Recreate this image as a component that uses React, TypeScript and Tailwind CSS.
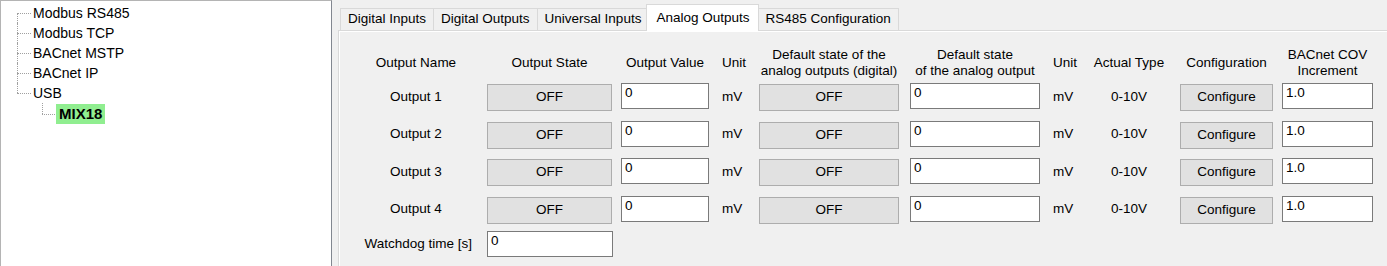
import React from 'react';

const cols = [
  'w-[142px]',
  'w-[125px]',
  'ml-[9px] w-[88px]',
  'ml-[13px] w-[37px]',
  'w-[140px]',
  'ml-[11px] w-[130px]',
  'ml-[13px] w-[40px]',
  'w-[72px]',
  'ml-[15px] w-[93px]',
  'ml-[9px] w-[91px]',
];

const headers = [
  'Output Name',
  'Output State',
  'Output Value',
  'Unit',
  'Default state of the\nanalog outputs (digital)',
  'Default state\nof the analog output',
  'Unit',
  'Actual Type',
  'Configuration',
  'BACnet COV\nIncrement',
];

const tabs = ['Digital Inputs', 'Digital Outputs', 'Universal Inputs', 'Analog Outputs', 'RS485 Configuration'];

const treeItems = ['Modbus RS485', 'Modbus TCP', 'BACnet MSTP', 'BACnet IP', 'USB'];

function Btn({ label }: { label: string }) {
  return (
    <div className="mt-[1px] h-[27px] w-full flex items-center justify-center bg-[#e1e1e1] border border-[#adadad]">
      {label}
    </div>
  );
}

function Field({ value }: { value: string }) {
  return (
    <div className="h-[26px] w-full bg-white border border-[#7a7a7a] pl-[3px] pt-[1px] leading-[16px]">{value}</div>
  );
}

function Label({ text, left }: { text: string; left?: boolean }) {
  return <div className={`h-[28px] flex items-center ${left ? 'justify-start' : 'justify-center'}`}>{text}</div>;
}

function Row({ cells }: { cells: React.ReactNode[] }) {
  return (
    <div className="flex items-start h-[28px]">
      {cells.map((c, i) => (
        <div key={i} className={`shrink-0 ${cols[i]}`}>
          {c}
        </div>
      ))}
    </div>
  );
}

function TreeRow({ text, pos }: { text: string; pos: 'first' | 'mid' | 'last' }) {
  return (
    <div className="flex items-center h-[20px] pl-[16px]">
      <span className="relative w-[14px] self-stretch">
        <span
          className={`absolute left-0 border-l border-dotted border-[#a0a0a0] ${
            pos === 'first' ? 'top-[10px] bottom-0' : pos === 'last' ? 'top-0 h-[10px]' : 'top-0 bottom-0'
          }`}
        />
        <span className="absolute left-0 right-0 top-[10px] border-t border-dotted border-[#a0a0a0]" />
      </span>
      <span className="ml-[2px]">{text}</span>
    </div>
  );
}

export default function App() {
  return (
    <div className="flex h-[266px] w-[1387px] overflow-hidden bg-[#f0f0f0] text-black font-['Liberation_Sans',Arial,sans-serif]">
      {/* Tree */}
      <div className="w-[332px] shrink-0 bg-white border-t border-l border-[#b4b4b4] border-r border-r-[#828790] pt-[2px] text-[14px]">
        {treeItems.map((t, i) => (
          <TreeRow key={t} text={t} pos={i === 0 ? 'first' : i === treeItems.length - 1 ? 'last' : 'mid'} />
        ))}
        <div className="flex items-center h-[20px] pl-[41px] mt-[1px]">
          <span className="relative w-[13px] self-stretch">
            <span className="absolute left-0 top-[-1px] h-[11px] border-l border-dotted border-[#a0a0a0]" />
            <span className="absolute left-0 right-0 top-[10px] border-t border-dotted border-[#a0a0a0]" />
          </span>
          <span className="ml-[1px] h-[20px] px-[3px] flex items-center bg-[#90ee90] font-bold text-[15px]">MIX18</span>
        </div>
      </div>

      {/* Tab control */}
      <div className="ml-[6px] flex-1 flex flex-col text-[13.5px]">
        <div className="h-[30px] flex items-end pl-[2px]">
          {tabs.map((t) => {
            const active = t === 'Analog Outputs';
            return active ? (
              <div
                key={t}
                className="relative z-10 -mx-[2px] mb-[-1px] h-[27px] px-[9px] flex items-center bg-white border border-b-0 border-[#d9d9d9]"
              >
                {t}
              </div>
            ) : (
              <div
                key={t}
                className="h-[22px] px-[7px] flex items-center bg-[#f0f0f0] border border-b-0 border-r-0 last:border-r border-[#d9d9d9]"
              >
                {t}
              </div>
            );
          })}
        </div>
        <div className="flex-1 border-t border-l border-[#d9d9d9]">
          <div className="h-full border-t border-l border-white pl-[5px] pt-[14px]">
            <div className="flex items-center h-[34px] leading-[16px]">
              {headers.map((h, i) => (
                <div
                  key={i}
                  className={`shrink-0 whitespace-pre-line ${cols[i]} ${i === 3 || i === 6 ? 'text-left' : 'text-center'}`}
                >
                  {h}
                </div>
              ))}
            </div>
            <div className="mt-[3px] flex flex-col gap-[9.5px]">
              {[1, 2, 3, 4].map((n) => (
                <Row
                  key={n}
                  cells={[
                    <Label text={`Output ${n}`} />,
                    <Btn label="OFF" />,
                    <Field value="0" />,
                    <Label text="mV" left />,
                    <Btn label="OFF" />,
                    <Field value="0" />,
                    <Label text="mV" left />,
                    <Label text="0-10V" />,
                    <Btn label="Configure" />,
                    <Field value="1.0" />,
                  ]}
                />
              ))}
              <div className="-mt-[2px] flex items-start">
                <div className="w-[142px] shrink-0 h-[26px] flex items-center justify-end pr-[15px]">Watchdog time [s]</div>
                <div className="w-[126px] shrink-0">
                  <Field value="0" />
                </div>
              </div>
            </div>
          </div>
        </div>
      </div>
    </div>
  );
}
